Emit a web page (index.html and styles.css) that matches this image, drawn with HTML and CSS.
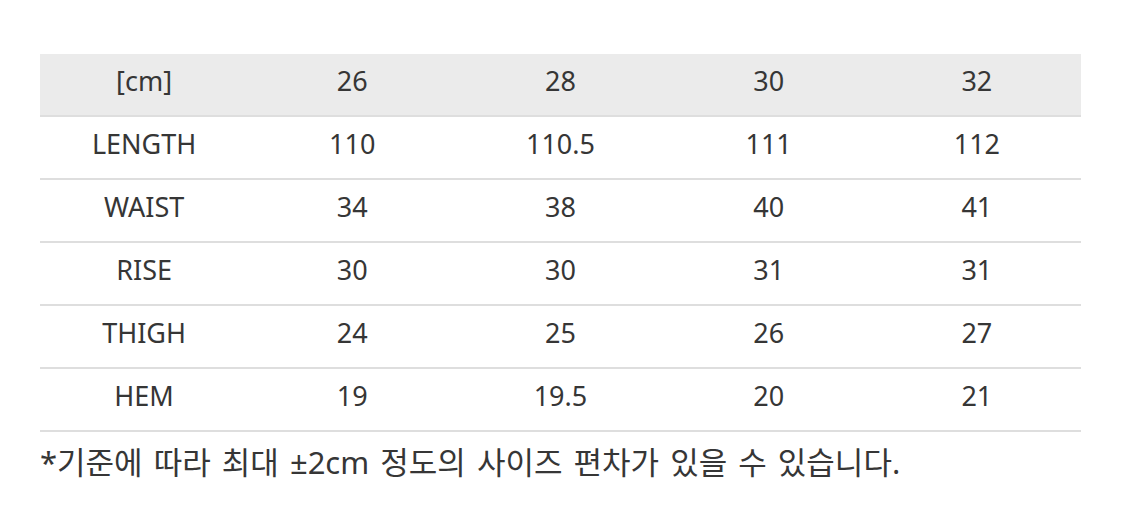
FILE: index.html
```html
<!DOCTYPE html>
<html lang="ko">
<head>
<meta charset="utf-8">
<link rel="stylesheet" href="styles.css">
</head>
<body>
<div class="wrap">
  <table class="size">
    <thead>
      <tr><th>[cm]</th><th>26</th><th>28</th><th>30</th><th>32</th></tr>
    </thead>
    <tbody>
      <tr><td>LENGTH</td><td>110</td><td>110.5</td><td>111</td><td>112</td></tr>
      <tr><td>WAIST</td><td>34</td><td>38</td><td>40</td><td>41</td></tr>
      <tr><td>RISE</td><td>30</td><td>30</td><td>31</td><td>31</td></tr>
      <tr><td>THIGH</td><td>24</td><td>25</td><td>26</td><td>27</td></tr>
      <tr><td>HEM</td><td>19</td><td>19.5</td><td>20</td><td>21</td></tr>
    </tbody>
  </table>
  <p class="note">*기준에 따라 최대 ±2cm 정도의 사이즈 편차가 있을 수 있습니다.</p>
</div>
</body>
</html>
```

FILE: styles.css
```css
html, body {
  margin: 0;
  padding: 0;
  background: #fff;
}
.wrap {
  padding: 54px 44px 0 40px;
  font-family: "Noto Sans", "Noto Sans CJK KR", sans-serif;
  color: #363636;
}
.size {
  width: 1041px;
  border-collapse: collapse;
  table-layout: fixed;
}
.size th, .size td {
  font-weight: 400;
  font-size: 27px;
  text-align: center;
  height: 53px;
  padding: 0 0 8px;
  border-bottom: 2px solid #dedede;
  line-height: 1;
}
.size thead th {
  background: #ebebeb;
}
.note {
  margin: 10px 0 0;
  font-size: 31px;
  line-height: 40px;
  word-spacing: 3px;
}
```
